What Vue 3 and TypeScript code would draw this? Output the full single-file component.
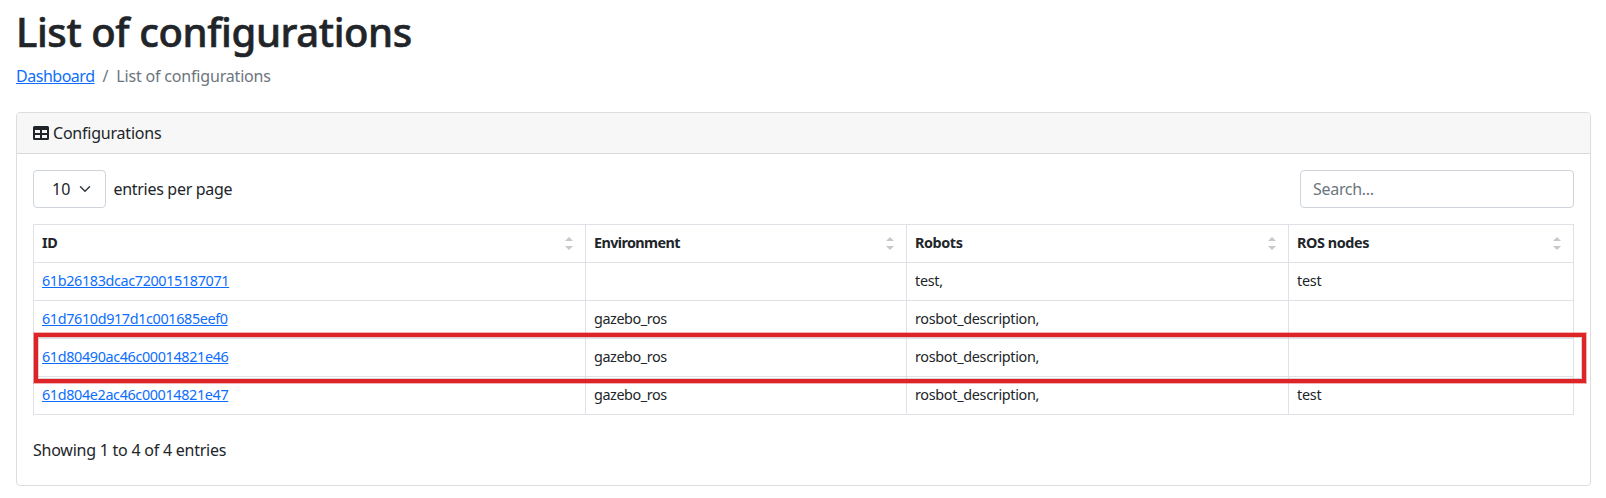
<script setup lang="ts">
import { ref } from 'vue'

interface Configuration {
  id: string
  environment: string
  robots: string
  nodes: string
}

const columns = [
  { key: 'id', label: 'ID' },
  { key: 'environment', label: 'Environment' },
  { key: 'robots', label: 'Robots' },
  { key: 'nodes', label: 'ROS nodes' },
]

const configurations: Configuration[] = [
  { id: '61b26183dcac720015187071', environment: '', robots: 'test,', nodes: 'test' },
  { id: '61d7610d917d1c001685eef0', environment: 'gazebo_ros', robots: 'rosbot_description,', nodes: '' },
  { id: '61d80490ac46c00014821e46', environment: 'gazebo_ros', robots: 'rosbot_description,', nodes: '' },
  { id: '61d804e2ac46c00014821e47', environment: 'gazebo_ros', robots: 'rosbot_description,', nodes: 'test' },
]

const search = ref('')
</script>

<template>
  <main class="page">
    <h1>List of configurations</h1>
    <nav class="breadcrumb">
      <a href="#" class="crumb">Dashboard</a>
      <span class="slash">/</span>
      <span>List of configurations</span>
    </nav>

    <section class="card">
      <header class="card-header">
        <svg class="table-icon" viewBox="0 0 16 14" width="16" height="14">
          <path
            fill="currentColor"
            fill-rule="evenodd"
            d="M1.5 0h13A1.5 1.5 0 0 1 16 1.5v11a1.5 1.5 0 0 1-1.5 1.5h-13A1.5 1.5 0 0 1 0 12.5v-11A1.5 1.5 0 0 1 1.5 0ZM2 4v3h5V4ZM9 4v3h5V4ZM2 9v3h5V9ZM9 9v3h5V9Z"
          />
        </svg>
        <span>Configurations</span>
      </header>

      <div class="card-body">
        <div class="toolbar">
          <div class="per-page">
            <button type="button" class="select">
              <span>10</span>
              <svg viewBox="0 0 16 16" width="12" height="12">
                <path
                  d="m2 5 6 6 6-6"
                  fill="none"
                  stroke="#343a40"
                  stroke-width="2"
                  stroke-linecap="round"
                  stroke-linejoin="round"
                />
              </svg>
            </button>
            <span class="per-page-label">entries per page</span>
          </div>
          <input v-model="search" class="search" type="text" placeholder="Search..." />
        </div>

        <div class="table-wrap">
          <table class="table">
            <colgroup>
              <col class="col-id" />
              <col class="col-environment" />
              <col class="col-robots" />
              <col />
            </colgroup>
            <thead>
              <tr>
                <th v-for="column in columns" :key="column.key">
                  <div class="heading">
                    <span :class="['label', 'label-' + column.key]">{{ column.label }}</span>
                    <svg viewBox="0 0 8 13" width="8" height="13">
                      <path d="M0 4 4 0l4 4ZM0 9l4 4 4-4Z" fill="#c8c8c8" />
                    </svg>
                  </div>
                </th>
              </tr>
            </thead>
            <tbody>
              <tr v-for="row in configurations" :key="row.id">
                <td class="id-cell"><a href="#">{{ row.id }}</a></td>
                <td class="environment-cell">{{ row.environment }}</td>
                <td class="robots-cell">{{ row.robots }}</td>
                <td>{{ row.nodes }}</td>
              </tr>
            </tbody>
          </table>
          <div class="highlight"></div>
        </div>

        <p class="info">Showing 1 to 4 of 4 entries</p>
      </div>
    </section>
  </main>
</template>

<style>
body {
  margin: 0;
  background: #fff;
}
</style>

<style scoped>
* {
  box-sizing: border-box;
}

.page {
  height: 498px;
  padding: 8px 15px 0 16px;
  overflow: hidden;
  color: #212529;
  font: 400 16px/24px "Noto Sans", "Open Sans", sans-serif;
  letter-spacing: -0.22px;
}

h1 {
  margin: 0;
  font-size: 40px;
  font-weight: 500;
  line-height: 48px;
  letter-spacing: -0.4px;
  -webkit-text-stroke: 0.6px #212529;
}

a {
  color: #0d6efd;
  text-decoration: underline;
  text-decoration-thickness: 1px;
  text-underline-offset: 1px;
}

.breadcrumb {
  display: flex;
  margin-top: 8px;
  color: #6c757d;
  letter-spacing: -0.18px;
}

.crumb {
  letter-spacing: -0.48px;
}

.slash {
  padding: 0 8px;
}

.card {
  height: 374px;
  margin-top: 24px;
  border: 1px solid #dcdddf;
  border-radius: 4px;
}

.card-header {
  display: flex;
  align-items: center;
  gap: 4px;
  height: 41px;
  padding: 0 16px;
  background: #f7f7f7;
  border-bottom: 1px solid #d8d9da;
  border-radius: 3px 3px 0 0;
}

.card-body {
  padding: 16px;
}

.toolbar,
.per-page {
  display: flex;
  align-items: center;
  justify-content: space-between;
}

.select {
  display: flex;
  align-items: center;
  justify-content: space-between;
  width: 73px;
  height: 38px;
  padding: 0 14px 0 18px;
  background: #fff;
  border: 1px solid #ced4da;
  border-radius: 4px;
  color: inherit;
  font: inherit;
}

.per-page-label {
  margin-left: 7.5px;
  letter-spacing: -0.3px;
}

.search {
  width: 274px;
  height: 38px;
  padding: 0 12px;
  background: #fff;
  border: 1px solid #ced4da;
  border-radius: 4px;
  color: inherit;
  font: inherit;
  letter-spacing: -0.3px;
  outline: none;
}

.search::placeholder {
  color: #6c757d;
  opacity: 1;
}

.table-wrap {
  position: relative;
  margin-top: 16px;
}

.table {
  width: 100%;
  border-collapse: collapse;
  table-layout: fixed;
  font-size: 14.4px;
  line-height: 21px;
}

.col-id {
  width: 552px;
}

.col-environment {
  width: 321px;
}

.col-robots {
  width: 382px;
}

.table th,
.table td {
  height: 38px;
  padding: 0 8px;
  border: 1px solid #dee2e6;
  text-align: left;
}

.table td {
  padding-bottom: 2px;
}

.heading {
  display: flex;
  align-items: center;
  justify-content: space-between;
  padding-right: 4px;
  font-weight: 700;
  letter-spacing: -0.42px;
}

.label {
  padding-bottom: 2px;
}

.label-environment {
  letter-spacing: -0.62px;
}

.id-cell {
  letter-spacing: -0.37px;
}

.environment-cell {
  letter-spacing: -0.42px;
}

.robots-cell {
  letter-spacing: -0.31px;
}

.highlight {
  position: absolute;
  top: 109px;
  left: 1px;
  width: 1552px;
  height: 50px;
  border: 4px solid #dd2527;
  box-shadow: 0 0 0 1px rgba(221, 37, 39, 0.35), inset 0 0 0 1px rgba(150, 100, 105, 0.3);
  pointer-events: none;
}

.info {
  margin: 23px 0 0;
  letter-spacing: -0.24px;
}
</style>
